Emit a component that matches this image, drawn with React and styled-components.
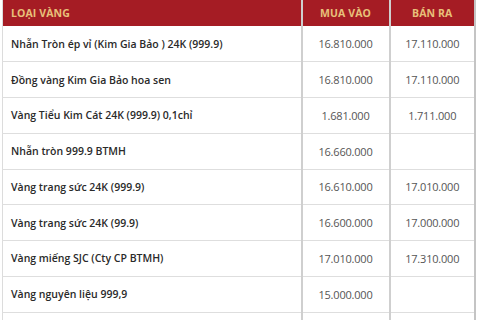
import React from 'react';
import styled, { createGlobalStyle } from 'styled-components';

const rows = [
  ['Nhẫn Tròn ép vỉ (Kim Gia Bảo ) 24K (999.9)', '16.810.000', '17.110.000'],
  ['Đồng vàng Kim Gia Bảo hoa sen', '16.810.000', '17.110.000'],
  ['Vàng Tiểu Kim Cát 24K (999.9) 0,1chỉ', '1.681.000', '1.711.000'],
  ['Nhẫn tròn 999.9 BTMH', '16.660.000', ''],
  ['Vàng trang sức 24K (999.9)', '16.610.000', '17.010.000'],
  ['Vàng trang sức 24K (99.9)', '16.600.000', '17.000.000'],
  ['Vàng miếng SJC (Cty CP BTMH)', '17.010.000', '17.310.000'],
  ['Vàng nguyên liệu 999,9', '15.000.000', ''],
  ['', '', ''],
];

function App() {
  return (
    <>
      <GlobalStyle />
      <Wrap>
        <PriceTable>
          <colgroup>
            <col style={{ width: 299 }} />
            <col style={{ width: 88 }} />
            <col />
          </colgroup>
          <thead>
            <tr>
              <HeadCell>Loại vàng</HeadCell>
              <HeadCell center>Mua vào</HeadCell>
              <HeadCell center>Bán ra</HeadCell>
            </tr>
          </thead>
          <tbody>
            {rows.map((r, i) => (
              <Row key={i}>
                <NameCell>{r[0]}</NameCell>
                <PriceCell>{r[1]}</PriceCell>
                <PriceCell>{r[2]}</PriceCell>
              </Row>
            ))}
          </tbody>
        </PriceTable>
      </Wrap>
    </>
  );
}

const GlobalStyle = createGlobalStyle`
  html, body {
    margin: 0;
    background: #ffffff;
    overflow: hidden;
  }
  body {
    font-family: 'Open Sans', 'Liberation Sans', sans-serif;
  }
`;

const Wrap = styled.div`
  width: 480px;
  height: 320px;
  overflow: hidden;
  padding-left: 2px;
  box-sizing: border-box;
`;

const PriceTable = styled.table`
  width: 474px;
  border-collapse: collapse;
  table-layout: fixed;
  border-left: 1px solid #dcdcdc;
  border-right: 2px solid #c4c4c4;
`;

const HeadCell = styled.th`
  height: 25px;
  padding: 0 0 1px ${(p) => (p.center ? '0' : '8px')};
  background: #a51c24;
  color: #e8c07a;
  font-size: 10.5px;
  font-weight: 700;
  text-transform: uppercase;
  text-align: ${(p) => (p.center ? 'center' : 'left')};
  border-left: 2px solid #cfcfcf;
  letter-spacing: 0.1px;
  &:first-child {
    border-left: none;
  }
`;

const Row = styled.tr`
  height: 35.75px;
  border-bottom: 1px solid #dedede;
`;

const NameCell = styled.td`
  padding: 0 0 0 8px;
  font-size: 10.5px;
  font-weight: 600;
  color: #2a2a2a;
  white-space: nowrap;
`;

const PriceCell = styled.td`
  padding: 0;
  text-align: center;
  font-size: 11px;
  color: #555555;
  border-left: 2px solid #cfcfcf;
  letter-spacing: -0.2px;
`;

export default App;
